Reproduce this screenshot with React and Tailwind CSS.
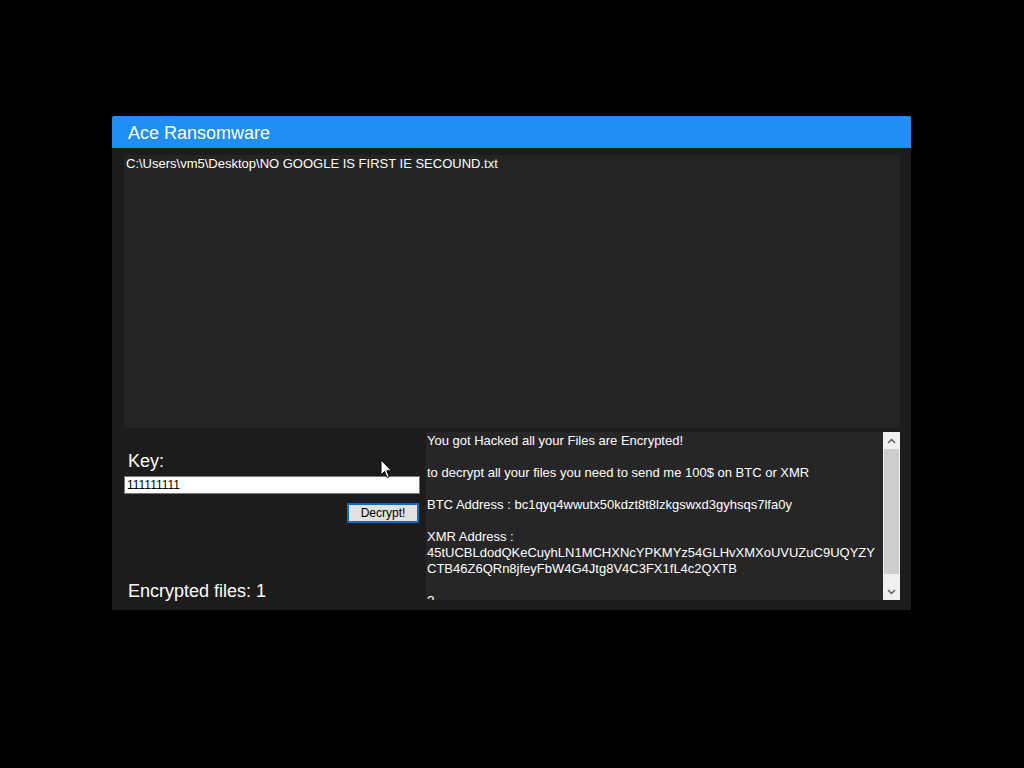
import React from "react";

const lines = [
  "You got Hacked all your Files are Encrypted!",
  "",
  "to decrypt all your files you need to send me 100$ on BTC or XMR",
  "",
  "BTC Address : bc1qyq4wwutx50kdzt8t8lzkgswxd3gyhsqs7lfa0y",
  "",
  "XMR Address :",
  "45tUCBLdodQKeCuyhLN1MCHXNcYPKMYz54GLHvXMXoUVUZuC9UQYZY",
  "CTB46Z6QRn8jfeyFbW4G4Jtg8V4C3FX1fL4c2QXTB",
  "",
  "?",
];

const Cursor = () => (
  <svg
    className="absolute left-[380px] top-[459px]"
    width="13"
    height="20"
    viewBox="0 0 13 20"
  >
    <path
      d="M1 1 L1 16 L4.5 12.5 L7 18.5 L9.3 17.5 L6.8 11.8 L11.5 11.8 Z"
      fill="#ffffff"
      stroke="#000000"
      strokeWidth="1"
      strokeLinejoin="round"
    />
  </svg>
);

const ScrollBar = () => (
  <div className="flex w-[17px] flex-col bg-[#f0f0f0]">
    <div className="flex h-[17px] items-center justify-center">
      <svg width="9" height="6" viewBox="0 0 9 6">
        <path d="M1 5 L4.5 1.5 L8 5" fill="none" stroke="#606060" strokeWidth="1.5" />
      </svg>
    </div>
    <div className="mx-[1px] h-[125px] bg-[#cdcdcd]" />
    <div className="flex-1" />
    <div className="flex h-[17px] items-center justify-center">
      <svg width="9" height="6" viewBox="0 0 9 6">
        <path d="M1 1 L4.5 4.5 L8 1" fill="none" stroke="#606060" strokeWidth="1.5" />
      </svg>
    </div>
  </div>
);

const App = () => {
  return (
    <div className="relative h-[768px] w-[1024px] bg-black pl-[112px] pt-[116px] font-['Liberation_Sans',Arial,sans-serif]">
      <div className="flex h-[494px] w-[799px] flex-col rounded-t-[2px] bg-[#1c1c1c]">
        <div className="flex h-[32px] items-center rounded-t-[2px] bg-[#1f8ef5] pl-[16px] pt-[2px] text-[18px] text-white">
          Ace Ransomware
        </div>
        <div className="flex flex-1 flex-col pl-[12px] pr-[11px] pt-[7px]">
          <div className="h-[273px] bg-[#242424] px-[2px] pt-[1px] text-[13px] leading-[16px] text-white">
            C:\Users\vm5\Desktop\NO GOOGLE IS FIRST IE SECOUND.txt
          </div>
          <div className="mt-[4px] flex h-[168px] gap-[6px]">
            <div className="flex w-[296px] flex-col">
              <div className="mt-[19px] pl-[4px] text-[18px] leading-[21px] text-white">
                Key:
              </div>
              <div className="mt-[4px] h-[18px] border border-[#7a7a7a] bg-white pl-[2px] text-[12px] leading-[16px] text-black">
                111111111
              </div>
              <div className="mt-[9px] flex justify-end pr-[1px]">
                <button className="h-[20px] w-[72px] border-2 border-[#0a6fc4] bg-[#e1e1e1] text-[12px] leading-[14px] text-black">
                  Decrypt!
                </button>
              </div>
              <div className="mt-auto pl-[4px] text-[18px] leading-[17px] text-white">
                Encrypted files: 1
              </div>
            </div>
            <div className="flex w-[474px] bg-[#262626]">
              <div className="flex-1 overflow-hidden whitespace-pre pl-[1px] pt-[1px] text-[13px] leading-[16px] text-white">
                {lines.map((l, i) => (
                  <div key={i} className="h-[16px]">
                    {l}
                  </div>
                ))}
              </div>
              <ScrollBar />
            </div>
          </div>
        </div>
      </div>
      <Cursor />
    </div>
  );
};

export default App;
